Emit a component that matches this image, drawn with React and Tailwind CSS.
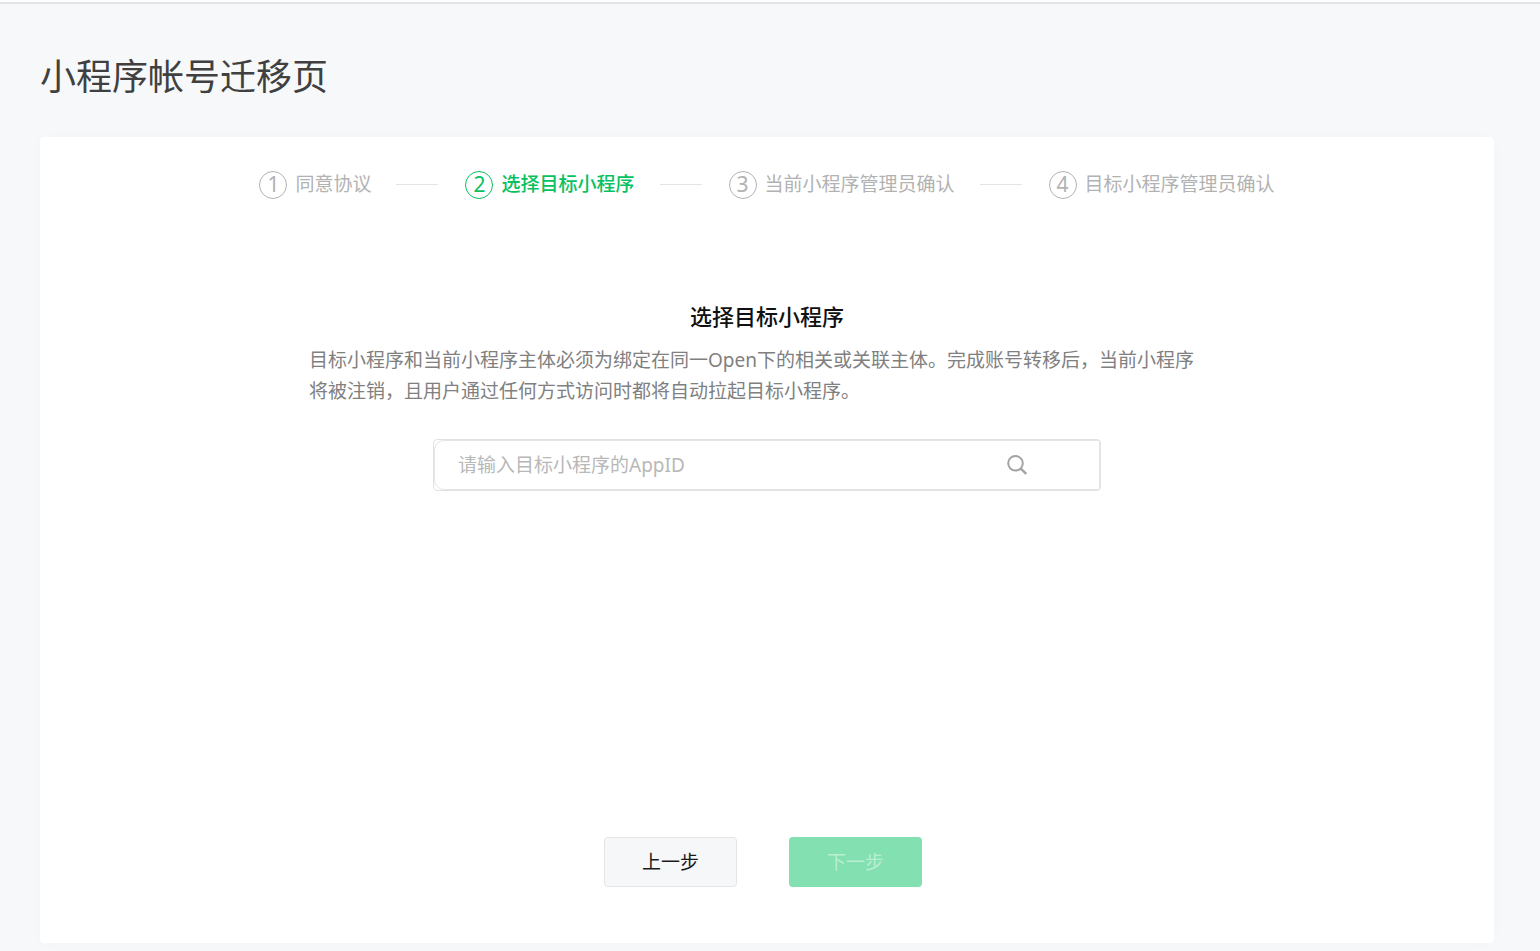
import React, { useState } from 'react';

const steps = ['同意协议', '选择目标小程序', '当前小程序管理员确认', '目标小程序管理员确认'];

const StepBar = ({ current }) => (
  <ol className="flex items-center justify-center">
    {steps.map((label, index) => {
      const active = index + 1 === current;
      return (
        <li key={label} className="flex items-center">
          {index > 0 && <span className="w-[42px] h-px ml-[25px] mr-[27px] bg-[#e4e4e4]" />}
          <span
            className={
              active
                ? 'flex items-center gap-2 text-[#07c160] font-medium'
                : 'flex items-center gap-2 text-[#b2b2b2]'
            }
          >
            <span className="flex items-center justify-center w-7 h-7 rounded-full border border-current text-[21px] leading-none font-normal">
              {index + 1}
            </span>
            <span className="whitespace-nowrap">{label}</span>
          </span>
        </li>
      );
    })}
  </ol>
);

const SearchIcon = () => (
  <svg width="20" height="20" viewBox="0 0 20 20" fill="none" stroke="#a3a3a3" strokeWidth="2">
    <circle cx="8.5" cy="8.3" r="7.3" />
    <path d="M13.6 13.4L19.2 19" strokeWidth="2.4" />
  </svg>
);

const App = () => {
  const [appId, setAppId] = useState('');

  const handleSubmit = (e) => {
    e.preventDefault();
  };

  return (
    <div
      lang="zh-CN"
      className="min-h-screen bg-[#f7f8fa] pb-2 font-['Noto_Sans','Noto_Sans_CJK_SC',sans-serif] text-[19px] leading-[31px]"
    >
      <header className="h-1 bg-white border-b-2 border-[#e3e4e6]" />

      <main className="pl-10 pr-[46px]">
        <h1 className="pt-[46px] pb-[33px] text-[36px] leading-[54px] text-[#404040] font-normal">小程序帐号迁移页</h1>

        <form
          onSubmit={handleSubmit}
          className="flex flex-col items-center bg-white rounded pt-8 pb-14 shadow-[0_1px_16px_rgba(0,0,0,0.02)]"
        >
          <StepBar current={2} />

          <section className="w-full max-w-[916px] mt-[101px]">
            <h2 className="text-center text-[22px] leading-[31px] font-medium text-[#111111]">选择目标小程序</h2>
            <p className="mt-[13px] text-[#808080]">
              目标小程序和当前小程序主体必须为绑定在同一Open下的相关或关联主体。完成账号转移后&#65292;当前小程序
              <br />
              将被注销&#65292;且用户通过任何方式访问时都将自动拉起目标小程序。
            </p>
          </section>

          <div className="flex items-center w-full max-w-[668px] h-[52px] mt-8 rounded border border-[#e2e2e2]">
            <div className="flex items-center w-full h-full pl-[23px] pr-[72px] rounded-l-[10px] border border-[#e5e5e5]">
              <input
                type="text"
                aria-label="AppID"
                value={appId}
                onChange={(e) => setAppId(e.target.value)}
                placeholder="请输入目标小程序的AppID"
                className="flex-1 min-w-0 outline-none text-[#353535] placeholder:text-[#b8b8b8]"
              />
              <button type="submit" aria-label="搜索">
                <SearchIcon />
              </button>
            </div>
          </div>

          <div className="flex gap-[52px] mt-[346px] mr-2">
            <button
              type="button"
              className="w-[133px] h-[50px] rounded border border-[#e4e5e7] bg-[#f6f7f9] text-[#1a1a1a]"
            >
              上一步
            </button>
            <button type="submit" disabled className="w-[133px] h-[50px] rounded bg-[#83e0b0] text-[#b9eed2]">
              下一步
            </button>
          </div>
        </form>
      </main>
    </div>
  );
};

export default App;
